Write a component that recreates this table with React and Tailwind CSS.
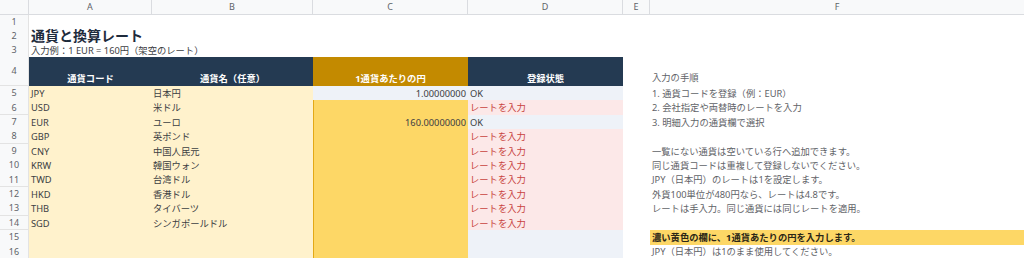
import React from "react";

const COLS = "grid grid-cols-[29px_123px_161px_155px_155px_27px_374px]";
const FONT = "font-['Noto_Sans','Noto_Sans_CJK_JP',sans-serif]";

const rows = [
  { n: 5, code: "JPY", name: "日本円", rate: "1.00000000", rateBg: "blue", status: "OK", note: "1. 通貨コードを登録（例：EUR）" },
  { n: 6, code: "USD", name: "米ドル", rate: "", status: "NG", note: "2. 会社指定や両替時のレートを入力" },
  { n: 7, code: "EUR", name: "ユーロ", rate: "160.00000000", status: "OK", note: "3. 明細入力の通貨欄で選択" },
  { n: 8, code: "GBP", name: "英ポンド", rate: "", status: "NG", note: "" },
  { n: 9, code: "CNY", name: "中国人民元", rate: "", status: "NG", note: "一覧にない通貨は空いている行へ追加できます。" },
  { n: 10, code: "KRW", name: "韓国ウォン", rate: "", status: "NG", note: "同じ通貨コードは重複して登録しないでください。" },
  { n: 11, code: "TWD", name: "台湾ドル", rate: "", status: "NG", note: "JPY（日本円）のレートは1を設定します。" },
  { n: 12, code: "HKD", name: "香港ドル", rate: "", status: "NG", note: "外貨100単位が480円なら、レートは4.8です。" },
  { n: 13, code: "THB", name: "タイバーツ", rate: "", status: "NG", note: "レートは手入力。同じ通貨には同じレートを適用。" },
  { n: 14, code: "SGD", name: "シンガポールドル", rate: "", status: "NG", note: "" },
  { n: 15, code: "", name: "", rate: "", status: "", note: "濃い黄色の欄に、1通貨あたりの円を入力します。", hl: true },
  { n: 16, code: "", name: "", rate: "", status: "", note: "JPY（日本円）は1のまま使用してください。" },
];

function RowHead({ n }) {
  return (
    <div className="bg-[#f8f9fa] border-r border-b border-[#e3e3e3] text-[9px] text-[#5f6368] flex items-center justify-center">
      {n}
    </div>
  );
}

function ColHead({ label, last }) {
  return (
    <div className={last ? "bg-[#f8f9fa] border-b border-[#dadce0] flex items-center justify-center text-[9px] text-[#5f6368]" : "bg-[#f8f9fa] border-r border-b border-[#dadce0] flex items-center justify-center text-[9px] text-[#5f6368]"}>
      {label}
    </div>
  );
}

export default function App() {
  return (
    <div className={`${FONT} w-[1024px] h-[258px] overflow-hidden bg-white text-[9.3px]`}>
      {/* column header */}
      <div className={`${COLS} h-[15px]`}>
        <ColHead label="" />
        <ColHead label="A" />
        <ColHead label="B" />
        <ColHead label="C" />
        <ColHead label="D" />
        <ColHead label="E" />
        <ColHead label="F" last />
      </div>
      {/* row 1 */}
      <div className={`${COLS} h-[14px]`}>
        <RowHead n={1} />
      </div>
      {/* row 2 */}
      <div className={`${COLS} h-[14px]`}>
        <RowHead n={2} />
        <div className="col-span-6 pl-[2px] flex items-center whitespace-nowrap text-[14px] leading-[14px] font-bold text-[#1e2b3c]">
          通貨と換算レート
        </div>
      </div>
      {/* row 3 */}
      <div className={`${COLS} h-[14px]`}>
        <RowHead n={3} />
        <div className="col-span-6 pl-[2px] pt-[1px] flex items-center whitespace-nowrap text-[#3c4043]">
          入力例：1 EUR = 160円（架空のレート）
        </div>
      </div>
      {/* row 4 header */}
      <div className={`${COLS} h-[29px]`}>
        <RowHead n={4} />
        <div className="col-span-2 bg-[#243a52] grid grid-cols-[123px_161px] items-end text-white font-bold">
          <div className="text-center">通貨コード</div>
          <div className="text-center">通貨名（任意）</div>
        </div>
        <div className="bg-[#c38a00] flex items-end justify-center text-white font-bold">1通貨あたりの円</div>
        <div className="bg-[#243a52] flex items-end justify-center text-white font-bold">登録状態</div>
        <div />
        <div className="flex items-end pl-[2px] pb-[1px] text-[#5f6368] whitespace-nowrap">入力の手順</div>
      </div>
      {rows.map((r) => (
        <div key={r.n} className={`${COLS} h-[14.4px]`}>
          <RowHead n={r.n} />
          <div className="bg-[#fff2cc] pl-[2px] pt-[1px] flex items-center text-[#3c4043] whitespace-nowrap">{r.code}</div>
          <div className="bg-[#fff2cc] pl-[1px] pt-[1px] flex items-center text-[#3c4043] whitespace-nowrap">{r.name}</div>
          {r.rateBg === "blue" ? (
            <div className="bg-[#eef2f8] pr-[2px] pt-[1px] flex items-center justify-end text-[#3c4043]">{r.rate}</div>
          ) : (
            <div className="bg-[#fdd766] border-l border-[#e3a916] pr-[2px] pt-[1px] flex items-center justify-end text-[#3c4043]">{r.rate}</div>
          )}
          {r.status === "NG" ? (
            <div className="bg-[#fce8e8] pl-[2px] pt-[1px] flex items-center text-[#c8433e] whitespace-nowrap">レートを入力</div>
          ) : (
            <div className="bg-[#eef2f8] pl-[2px] pt-[1px] flex items-center text-[#3c4043]">{r.status}</div>
          )}
          <div />
          {r.hl ? (
            <div className="bg-[#fdd766] pl-[2px] pt-[1px] flex items-center font-bold text-[#2b2616] whitespace-nowrap">{r.note}</div>
          ) : (
            <div className="pl-[2px] pt-[1px] flex items-center text-[#5f6368] whitespace-nowrap">{r.note}</div>
          )}
        </div>
      ))}
    </div>
  );
}
